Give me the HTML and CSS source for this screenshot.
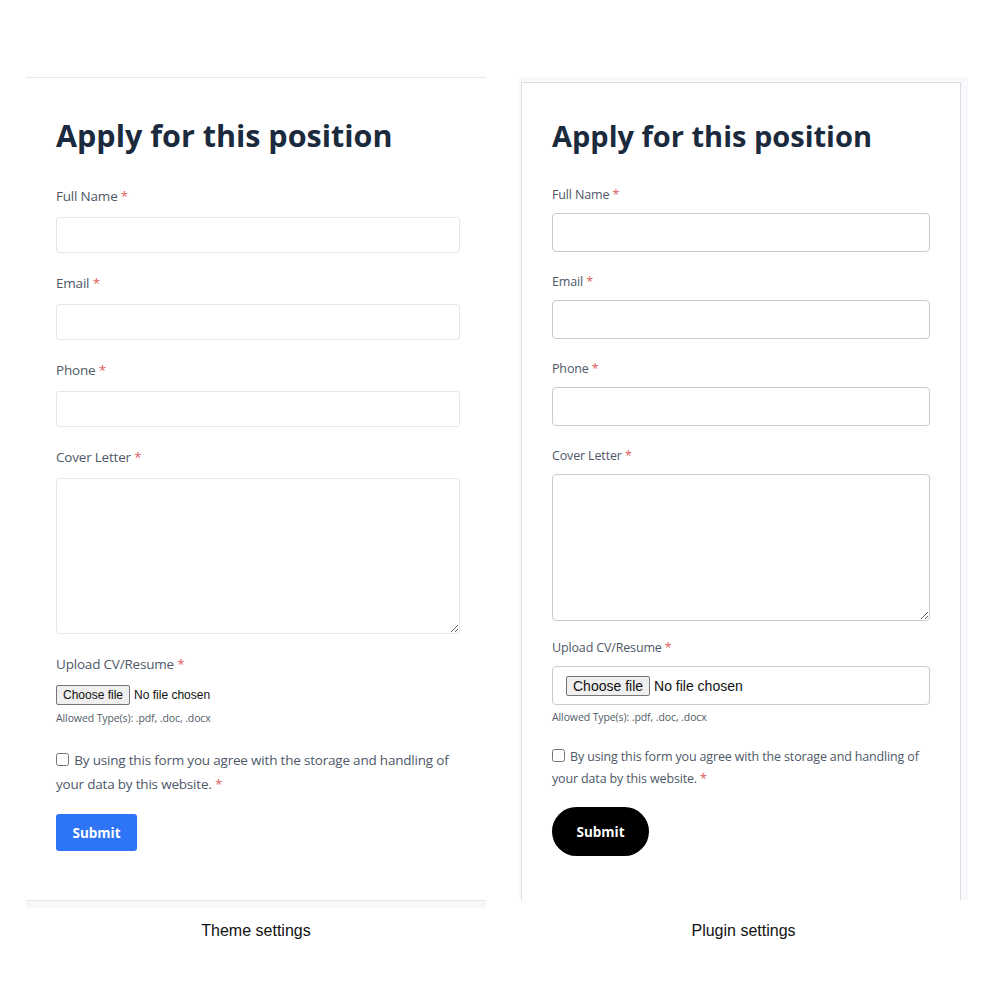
FILE: index.html
```html
<!DOCTYPE html>
<html lang="en">
<head>
  <meta charset="UTF-8">
  <meta name="viewport" content="width=device-width, initial-scale=1.0">
  <title>Apply form - theme vs plugin settings</title>
  <link rel="stylesheet" href="styles.css">
</head>
<body>

<div class="compare">

  <!-- Theme settings -->
  <div class="column column-theme">
    <div class="sheet">
      <form class="apply-form theme">
        <h2>Apply for this position</h2>
        <div class="field">
          <label>Full Name <span class="req">*</span></label>
          <input type="text">
        </div>
        <div class="field">
          <label>Email <span class="req">*</span></label>
          <input type="email">
        </div>
        <div class="field">
          <label>Phone <span class="req">*</span></label>
          <input type="tel">
        </div>
        <div class="field field-letter">
          <label>Cover Letter <span class="req">*</span></label>
          <textarea></textarea>
        </div>
        <div class="field field-upload">
          <label>Upload CV/Resume <span class="req">*</span></label>
          <div class="file-input">
            <span class="file-btn">Choose file</span>
            <span class="file-name">No file chosen</span>
          </div>
          <p class="hint">Allowed Type(s): .pdf, .doc, .docx</p>
        </div>
        <label class="consent">
          <input type="checkbox">
          By using this form you agree with the storage and handling of your data by this website. <span class="req">*</span>
        </label>
        <button type="button" class="submit">Submit</button>
      </form>
    </div>
    <div class="sheet-edge"></div>
    <p class="caption">Theme settings</p>
  </div>

  <!-- Plugin settings -->
  <div class="column column-plugin">
    <div class="frame">
      <div class="sheet">
        <form class="apply-form plugin">
          <h2>Apply for this position</h2>
          <div class="field">
            <label>Full Name <span class="req">*</span></label>
            <input type="text">
          </div>
          <div class="field">
            <label>Email <span class="req">*</span></label>
            <input type="email">
          </div>
          <div class="field">
            <label>Phone <span class="req">*</span></label>
            <input type="tel">
          </div>
          <div class="field field-letter">
            <label>Cover Letter <span class="req">*</span></label>
            <textarea></textarea>
          </div>
          <div class="field field-upload">
            <label>Upload CV/Resume <span class="req">*</span></label>
            <div class="file-input">
              <span class="file-btn">Choose file</span>
              <span class="file-name">No file chosen</span>
            </div>
            <p class="hint">Allowed Type(s): .pdf, .doc, .docx</p>
          </div>
          <label class="consent">
            <input type="checkbox">
            By using this form you agree with the storage and handling of your data by this website. <span class="req">*</span>
          </label>
          <button type="button" class="submit">Submit</button>
        </form>
      </div>
    </div>
    <p class="caption">Plugin settings</p>
  </div>

</div>

</body>
</html>
```

FILE: styles.css
```css
* { box-sizing: border-box; }

body, html {
  margin: 0;
  padding: 0;
  background: #fff;
  font-family: "Open Sans", "Noto Sans", sans-serif;
}

.compare {
  display: flex;
  padding-top: 77px;
}

.column-theme {
  width: 460px;
  margin-left: 26px;
}

.column-plugin {
  width: 449px;
  margin-left: 33px;
}

/* ---------- shared form ---------- */
.apply-form h2 {
  margin: 0;
  line-height: 38px;
  font-weight: 700;
  color: #1b2a3d;
}

.apply-form label {
  display: block;
  color: #4e5868;
}

.req {
  color: #e05d5d;
}

.apply-form input[type="text"],
.apply-form input[type="email"],
.apply-form input[type="tel"],
.apply-form textarea {
  display: block;
  width: 100%;
  background: #fff;
  font-family: inherit;
}

.file-input {
  display: flex;
  align-items: center;
  gap: 4px;
}

.file-btn {
  border: 1px solid #767676;
  border-radius: 2px;
  background: #efefef;
  color: #111;
  font-family: "Liberation Sans", Arial, sans-serif;
  padding: 0 6px;
}

.file-name {
  font-family: "Liberation Sans", Arial, sans-serif;
  color: #111;
}

.hint {
  margin: 0;
  font-size: 10.5px;
  line-height: 16px;
  letter-spacing: -0.1px;
  color: #525b67;
}

.consent input {
  width: 13px;
  height: 13px;
  margin: 0 2px 0 0;
  vertical-align: -1px;
}

.submit {
  border: none;
  color: #fff;
  font-family: inherit;
  font-size: 13.5px;
  font-weight: 700;
  cursor: pointer;
}

/* ---------- theme settings ---------- */
.column-theme .sheet {
  height: 824px;
  border-top: 1px solid #e6e8eb;
  border-bottom: 1px solid #e3e6ea;
  padding: 38px 26px 0 30px;
}

.sheet-edge {
  height: 7px;
  background: #f7f8fa;
}

.theme h2 {
  font-size: 30.5px;
  margin-bottom: 32px;
}

.theme .field {
  margin-bottom: 20px;
}

.theme label {
  font-size: 13.5px;
  line-height: 21px;
  letter-spacing: -0.2px;
}

.theme .field > label {
  margin-bottom: 10px;
}

.theme input[type="text"],
.theme input[type="email"],
.theme input[type="tel"] {
  height: 36px;
  border: 1px solid #e3e6ea;
  border-radius: 3px;
}

.theme textarea {
  height: 156px;
  border: 1px solid #e3e6ea;
  border-radius: 3px;
}

.theme .field-letter {
  margin-bottom: 20px;
}

.theme .field-upload {
  margin-bottom: 22px;
}

.theme .field-upload > label {
  margin-bottom: 10px;
}

.theme .file-btn {
  font-size: 12px;
  line-height: 18px;
}

.theme .file-name {
  font-size: 12px;
}

.theme .hint {
  margin-top: 5px;
}

.theme .consent {
  font-size: 13.5px;
  line-height: 24px;
  margin-bottom: 18px;
}

.theme .submit {
  width: 81px;
  height: 37px;
  background: #2e74f6;
  border-radius: 3px;
}

/* ---------- plugin settings ---------- */
.frame {
  height: 823px;
  background: #f8f9fb;
  padding: 5px 7px 0 2px;
}

.column-plugin .sheet {
  height: 100%;
  background: #fff;
  border: 1px solid #dcdee2;
  border-bottom: none;
  padding: 34px 30px 0 30px;
}

.plugin h2 {
  font-size: 29px;
  margin-bottom: 30px;
}

.plugin .field {
  margin-bottom: 20px;
}

.plugin label {
  font-size: 12.5px;
  line-height: 20px;
  letter-spacing: -0.15px;
}

.plugin .field > label {
  margin-bottom: 8px;
}

.plugin input[type="text"],
.plugin input[type="email"],
.plugin input[type="tel"] {
  height: 39px;
  border: 1px solid #cbcbcb;
  border-radius: 4px;
}

.plugin textarea {
  height: 147px;
  border: 1px solid #cbcbcb;
  border-radius: 4px;
}

.plugin .field-letter {
  margin-bottom: 17px;
}

.plugin .file-input {
  height: 39px;
  border: 1px solid #cbcbcb;
  border-radius: 4px;
  padding: 0 13px;
}

.plugin .file-btn {
  font-size: 14px;
  line-height: 18px;
}

.plugin .file-name {
  font-size: 14px;
}

.plugin .hint {
  margin-top: 4px;
}

.plugin .field-upload {
  margin-bottom: 21px;
}

.plugin .consent {
  font-size: 12.5px;
  line-height: 22px;
  margin-bottom: 17px;
}

.plugin .submit {
  width: 97px;
  height: 49px;
  background: #000;
  border-radius: 25px;
}

/* ---------- captions ---------- */
.caption {
  margin: 0;
  text-align: center;
  font-family: "Liberation Sans", Arial, sans-serif;
  font-size: 16px;
  line-height: 20px;
  color: #111;
}

.column-theme .caption {
  margin-top: 13px;
}

.column-plugin .caption {
  margin-top: 21px;
}
```
